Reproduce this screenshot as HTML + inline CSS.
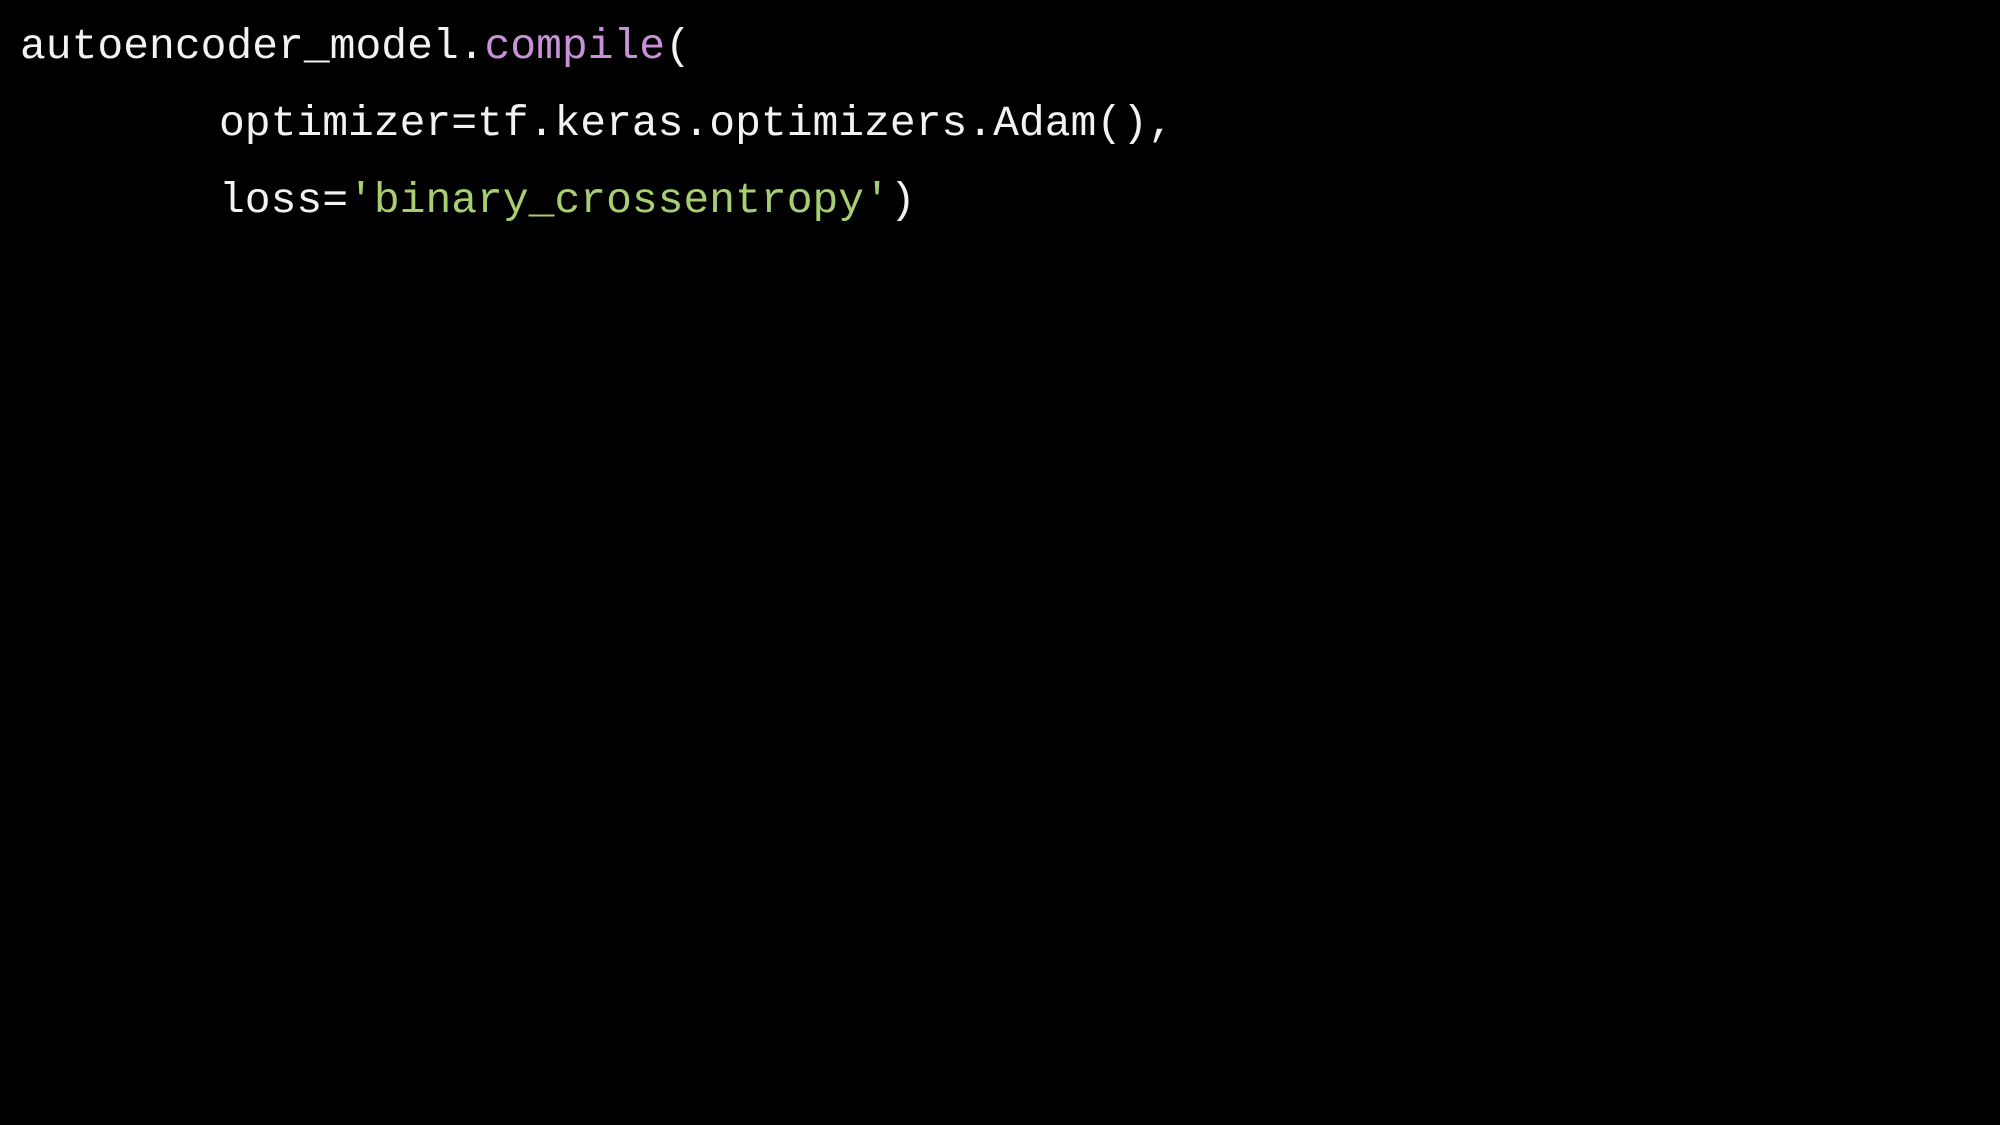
<!DOCTYPE html>
<html><head><meta charset="utf-8"><style>
html,body{margin:0;padding:0;background:#000;width:2000px;height:1125px;overflow:hidden}
.l{position:absolute;font-family:"Liberation Mono",monospace;font-size:43px;line-height:43px;color:#f2f2f2;white-space:pre}
.p{color:#c992d8}.g{color:#a7cf72}
</style></head><body>
<div class="l" style="left:20px;top:25px">autoencoder_model.<span class="p">compile</span>(</div>
<div class="l" style="left:219px;top:102px">optimizer=tf.keras.optimizers.Adam(),</div>
<div class="l" style="left:219px;top:179px">loss=<span class="g">'binary_crossentropy'</span>)</div>
</body></html>
